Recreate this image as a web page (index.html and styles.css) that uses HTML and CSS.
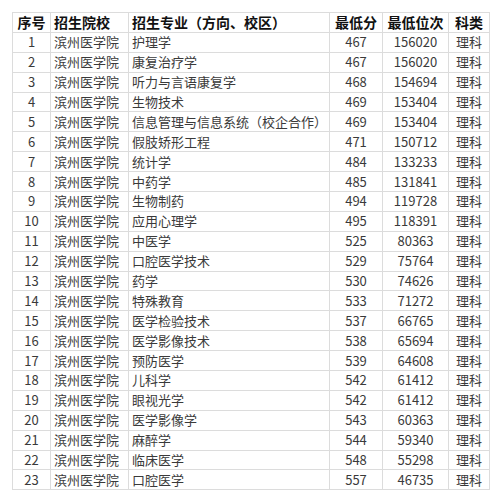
FILE: index.html
```html
<!DOCTYPE html>
<html lang="zh">
<head>
<meta charset="utf-8">
<link rel="stylesheet" href="styles.css">
</head>
<body>
<table class="score">
<colgroup>
<col class="c1"><col class="c2"><col class="c3"><col class="c4"><col class="c5"><col class="c6">
</colgroup>
<thead>
<tr><th class="ctr">序号</th><th class="lft">招生院校</th><th class="lft">招生专业（方向、校区）</th><th class="ctr">最低分</th><th class="ctr">最低位次</th><th class="ctr">科类</th></tr>
</thead>
<tbody>
<tr><td class="ctr">1</td><td>滨州医学院</td><td>护理学</td><td class="ctr">467</td><td class="ctr">156020</td><td class="ctr">理科</td></tr>
<tr><td class="ctr">2</td><td>滨州医学院</td><td>康复治疗学</td><td class="ctr">467</td><td class="ctr">156020</td><td class="ctr">理科</td></tr>
<tr><td class="ctr">3</td><td>滨州医学院</td><td>听力与言语康复学</td><td class="ctr">468</td><td class="ctr">154694</td><td class="ctr">理科</td></tr>
<tr><td class="ctr">4</td><td>滨州医学院</td><td>生物技术</td><td class="ctr">469</td><td class="ctr">153404</td><td class="ctr">理科</td></tr>
<tr><td class="ctr">5</td><td>滨州医学院</td><td>信息管理与信息系统（校企合作）</td><td class="ctr">469</td><td class="ctr">153404</td><td class="ctr">理科</td></tr>
<tr><td class="ctr">6</td><td>滨州医学院</td><td>假肢矫形工程</td><td class="ctr">471</td><td class="ctr">150712</td><td class="ctr">理科</td></tr>
<tr><td class="ctr">7</td><td>滨州医学院</td><td>统计学</td><td class="ctr">484</td><td class="ctr">133233</td><td class="ctr">理科</td></tr>
<tr><td class="ctr">8</td><td>滨州医学院</td><td>中药学</td><td class="ctr">485</td><td class="ctr">131841</td><td class="ctr">理科</td></tr>
<tr><td class="ctr">9</td><td>滨州医学院</td><td>生物制药</td><td class="ctr">494</td><td class="ctr">119728</td><td class="ctr">理科</td></tr>
<tr><td class="ctr">10</td><td>滨州医学院</td><td>应用心理学</td><td class="ctr">495</td><td class="ctr">118391</td><td class="ctr">理科</td></tr>
<tr><td class="ctr">11</td><td>滨州医学院</td><td>中医学</td><td class="ctr">525</td><td class="ctr">80363</td><td class="ctr">理科</td></tr>
<tr><td class="ctr">12</td><td>滨州医学院</td><td>口腔医学技术</td><td class="ctr">529</td><td class="ctr">75764</td><td class="ctr">理科</td></tr>
<tr><td class="ctr">13</td><td>滨州医学院</td><td>药学</td><td class="ctr">530</td><td class="ctr">74626</td><td class="ctr">理科</td></tr>
<tr><td class="ctr">14</td><td>滨州医学院</td><td>特殊教育</td><td class="ctr">533</td><td class="ctr">71272</td><td class="ctr">理科</td></tr>
<tr><td class="ctr">15</td><td>滨州医学院</td><td>医学检验技术</td><td class="ctr">537</td><td class="ctr">66765</td><td class="ctr">理科</td></tr>
<tr><td class="ctr">16</td><td>滨州医学院</td><td>医学影像技术</td><td class="ctr">538</td><td class="ctr">65694</td><td class="ctr">理科</td></tr>
<tr><td class="ctr">17</td><td>滨州医学院</td><td>预防医学</td><td class="ctr">539</td><td class="ctr">64608</td><td class="ctr">理科</td></tr>
<tr><td class="ctr">18</td><td>滨州医学院</td><td>儿科学</td><td class="ctr">542</td><td class="ctr">61412</td><td class="ctr">理科</td></tr>
<tr><td class="ctr">19</td><td>滨州医学院</td><td>眼视光学</td><td class="ctr">542</td><td class="ctr">61412</td><td class="ctr">理科</td></tr>
<tr><td class="ctr">20</td><td>滨州医学院</td><td>医学影像学</td><td class="ctr">543</td><td class="ctr">60363</td><td class="ctr">理科</td></tr>
<tr><td class="ctr">21</td><td>滨州医学院</td><td>麻醉学</td><td class="ctr">544</td><td class="ctr">59340</td><td class="ctr">理科</td></tr>
<tr><td class="ctr">22</td><td>滨州医学院</td><td>临床医学</td><td class="ctr">548</td><td class="ctr">55298</td><td class="ctr">理科</td></tr>
<tr><td class="ctr">23</td><td>滨州医学院</td><td>口腔医学</td><td class="ctr">557</td><td class="ctr">46735</td><td class="ctr">理科</td></tr>
</tbody>
</table>
</body>
</html>
```

FILE: styles.css
```css
html, body {
  margin: 0;
  padding: 0;
  background: #ffffff;
}
body {
  padding: 12px 0 0 12px;
  font-family: "Noto Sans CJK SC", "Noto Sans", sans-serif;
}
.score {
  border-collapse: collapse;
  table-layout: fixed;
  width: 477px;
  border: 1px solid #dcdcdc;
}
.c1 { width: 38px; }
.c2 { width: 78px; }
.c3 { width: 201px; }
.c4 { width: 53px; }
.c5 { width: 66px; }
.c6 { width: 41px; }
.score tr {
  height: 19.9px;
}
.score th, .score td {
  border: 1px solid #dcdcdc;
  padding: 0 3px;
  line-height: 18px;
  white-space: nowrap;
  overflow: hidden;
}
.score th {
  font-size: 14px;
  font-weight: bold;
  color: #111;
}
.score td {
  font-size: 13px;
  color: #3a3a3a;
  text-align: left;
}
.score .ctr { text-align: center; }
.score .lft { text-align: left; }
```
